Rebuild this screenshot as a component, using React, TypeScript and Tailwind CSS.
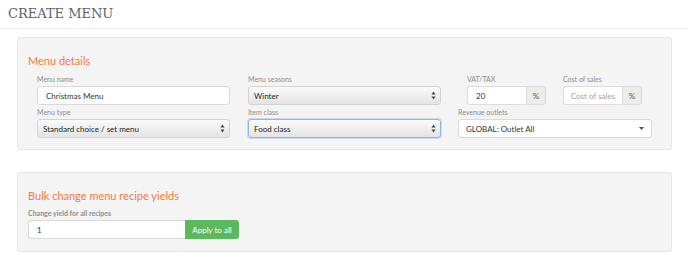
import React from 'react';

const lato = { fontFamily: 'Lato, "Open Sans", sans-serif' };

const Label = ({ children, className = '' }: { children: React.ReactNode; className?: string }) => (
  <div className={`text-[7px] leading-[13px] text-[#8c8c8c] ${className}`}>{children}</div>
);

const UpDown = () => (
  <svg width="5" height="9" viewBox="0 0 5 9" className="shrink-0">
    <path d="M2.5 0.5 L4.5 3.5 L0.5 3.5 Z" fill="#444" />
    <path d="M2.5 8.5 L4.5 5.5 L0.5 5.5 Z" fill="#444" />
  </svg>
);

const NativeSelect = ({ value, focused = false }: { value: string; focused?: boolean }) => (
  <div
    className={`flex h-[19px] w-[193px] items-center justify-between rounded-[3px] border pl-[5px] pr-[4px] text-[8px] text-[#222] bg-gradient-to-b from-[#fbfbfb] to-[#e4e4e4] ${
      focused ? 'border-[#8fb8e8] shadow-[0_0_0_1px_rgba(120,170,230,0.35)]' : 'border-[#d2d2d2]'
    }`}
  >
    <span>{value}</span>
    <UpDown />
  </div>
);

const TextInput = ({ value, width }: { value: string; width: string }) => (
  <div className={`flex h-[19px] ${width} items-center rounded-[3px] border border-[#d9d9d9] bg-white pl-[8px] text-[8px] text-[#333]`}>
    {value}
  </div>
);

const PercentInput = ({ value, placeholder = false }: { value: string; placeholder?: boolean }) => (
  <div className="flex h-[19px]">
    <div
      className={`flex w-[59px] items-center rounded-l-[3px] border border-r-0 border-[#dcdcdc] bg-white text-[8px] ${
        placeholder ? 'justify-center text-[#a3a3a3]' : 'pl-[8px] text-[#333]'
      }`}
    >
      {value}
    </div>
    <div className="flex w-[20px] items-center justify-center rounded-r-[3px] border border-[#dcdcdc] bg-[#ececec] text-[8px] text-[#555]">
      %
    </div>
  </div>
);

export default function App() {
  return (
    <div className="h-[260px] w-[688px] bg-white" style={lato}>
      <div className="flex h-[29px] items-center border-b border-[#efefef] pl-[8px]">
        <h1
          className="text-[13px] text-[#5b626b]"
          style={{ fontFamily: '"DejaVu Serif", "Liberation Serif", serif' }}
        >
          CREATE MENU
        </h1>
      </div>

      <div className="ml-[17px] mt-[8px] h-[113px] w-[655px] rounded-[3px] border border-[#e6e6e6] bg-[#f4f4f4] pl-[10px] pt-[15px]">
        <h2 className="text-[11px] leading-[16px] text-[#f47a3a]">Menu details</h2>
        <div className="mt-[4px] flex pl-[9px]">
          <div className="flex w-[193px] flex-col">
            <Label>Menu name</Label>
            <TextInput value="Christmas Menu" width="w-[193px]" />
            <Label className="mt-[1px]">Menu type</Label>
            <NativeSelect value="Standard choice / set menu" />
          </div>
          <div className="ml-[18px] flex w-[193px] flex-col">
            <Label>Menu seasons</Label>
            <NativeSelect value="Winter" />
            <Label className="mt-[1px]">Item class</Label>
            <NativeSelect value="Food class" focused />
          </div>
          <div className="ml-[17px] flex w-[194px] flex-col">
            <div className="flex pl-[9px]">
              <div className="flex flex-col">
                <Label>VAT/TAX</Label>
                <PercentInput value="20" />
              </div>
              <div className="ml-[17px] flex flex-col">
                <Label>Cost of sales</Label>
                <PercentInput value="Cost of sales" placeholder />
              </div>
            </div>
            <Label className="mt-[1px]">Revenue outlets</Label>
            <div className="flex h-[19px] w-[194px] items-center justify-between rounded-[3px] border border-[#d9d9d9] bg-white pl-[7px] pr-[7px] text-[8px] text-[#333]">
              <span>GLOBAL: Outlet All</span>
              <svg width="5" height="3" viewBox="0 0 5 3">
                <path d="M0 0 L5 0 L2.5 3 Z" fill="#555" />
              </svg>
            </div>
          </div>
        </div>
      </div>

      <div className="ml-[17px] mt-[22px] h-[80px] w-[655px] rounded-[3px] border border-[#e6e6e6] bg-[#f4f4f4] pl-[10px] pt-[15px]">
        <h2 className="text-[11px] leading-[16px] text-[#f47a3a]">Bulk change menu recipe yields</h2>
        <Label className="mt-[3px] font-bold">Change yield for all recipes</Label>
        <div className="flex">
          <div className="flex h-[19px] w-[157px] items-center rounded-l-[3px] border border-r-0 border-[#d9d9d9] bg-white pl-[8px] text-[8px] text-[#333]">
            1
          </div>
          <button className="h-[19px] w-[54px] rounded-r-[3px] bg-[#5cb85c] text-[8px] text-white">Apply to all</button>
        </div>
      </div>
    </div>
  );
}
